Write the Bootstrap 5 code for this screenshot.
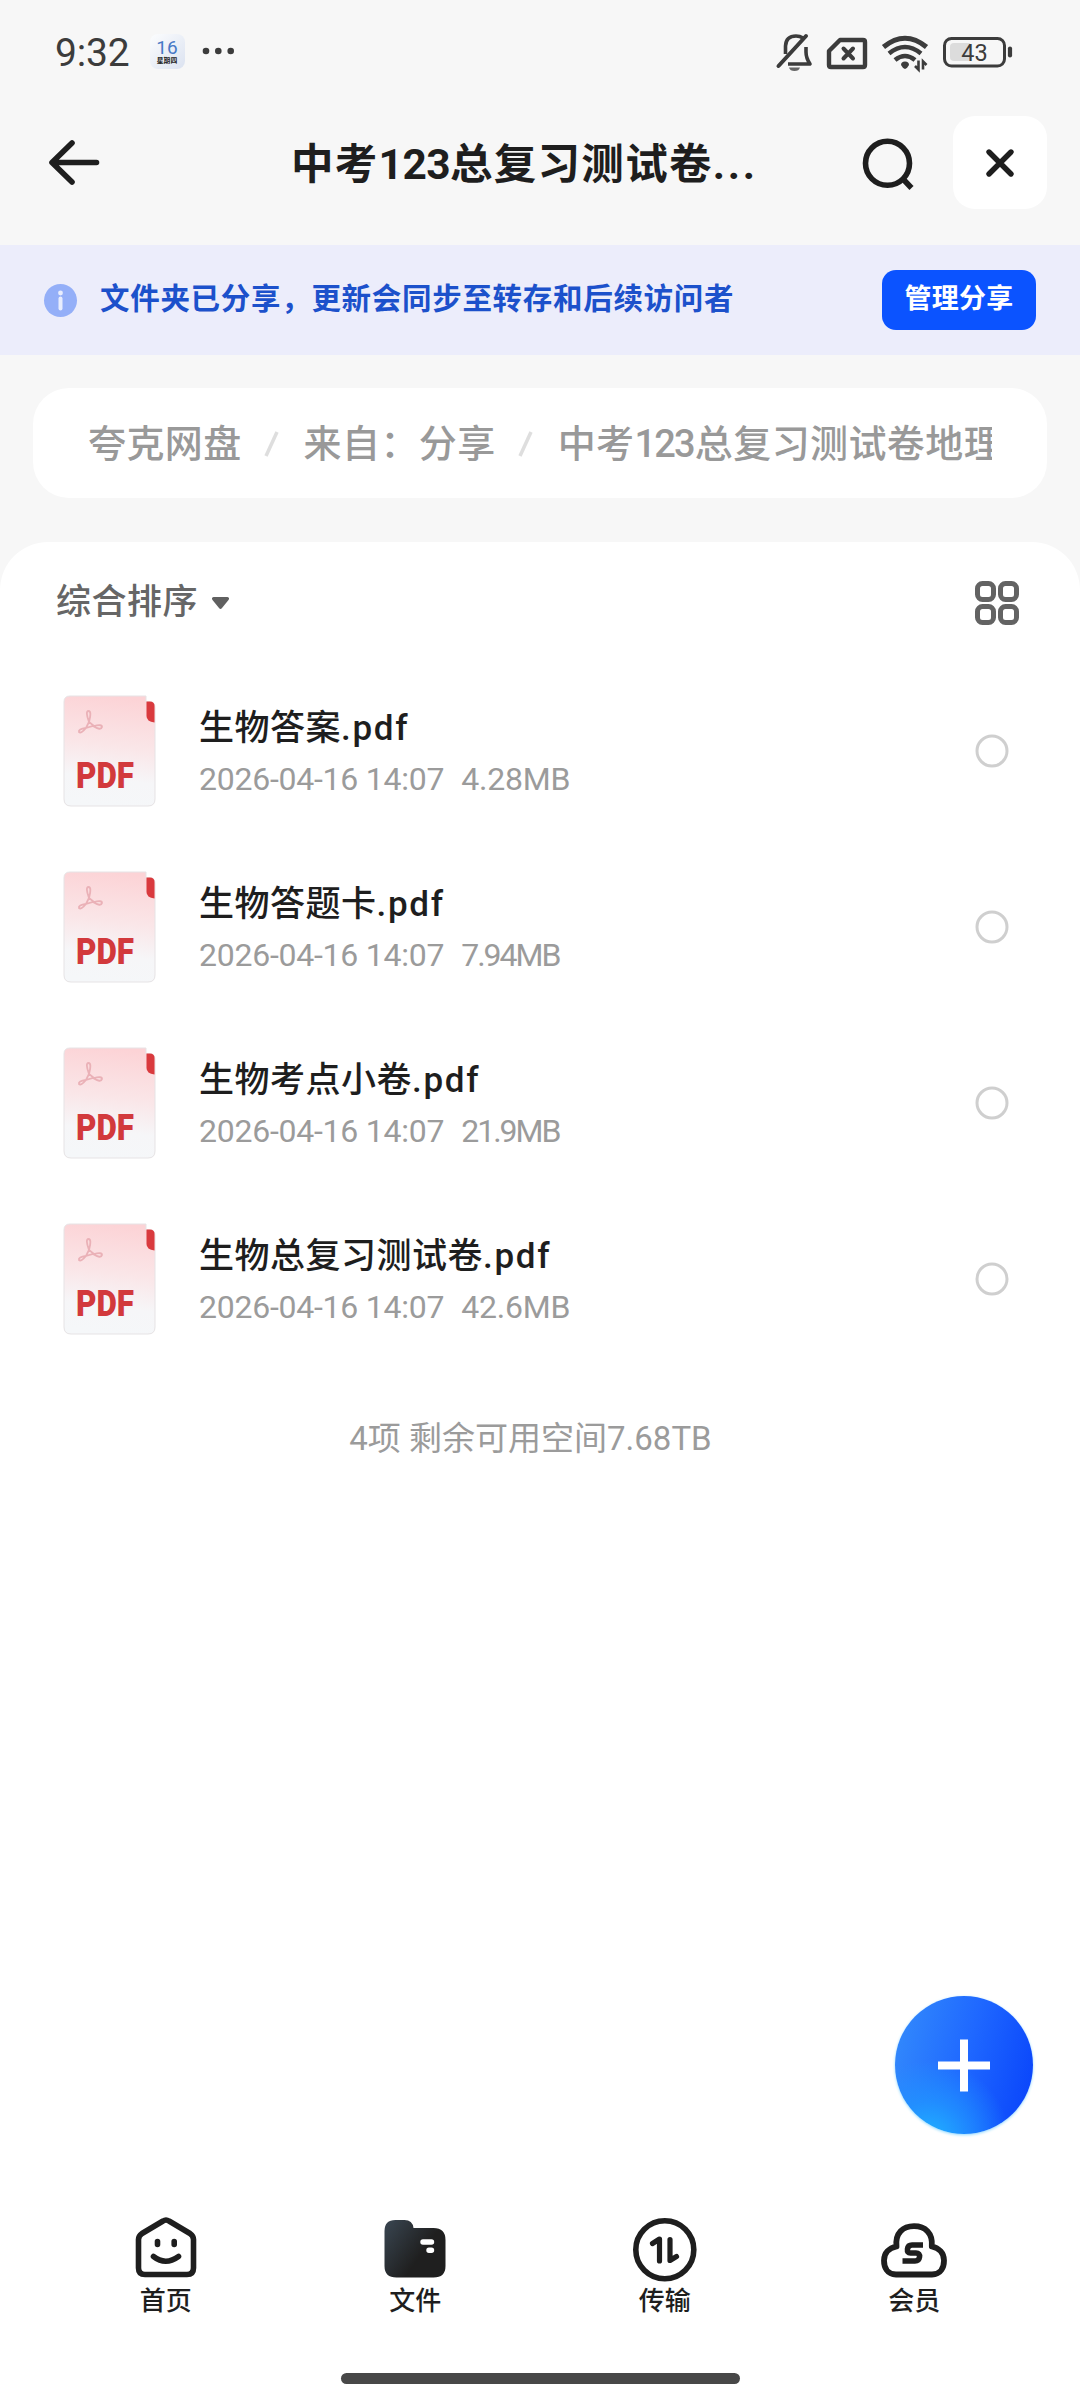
<!DOCTYPE html>
<html lang="zh-CN">
<head>
<meta charset="utf-8">
<meta name="viewport" content="width=device-width, initial-scale=1">
<title>夸克网盘</title>
<link href="https://cdn.jsdelivr.net/npm/bootstrap@5.3.0/dist/css/bootstrap.min.css" rel="stylesheet">
<style>
  body { font-family: Roboto, "Noto Sans CJK SC", sans-serif; background: #f7f7f7; color: #1e1e1e; }
  .screen { width: 1080px; height: 2400px; overflow: hidden; }
  svg { display: block; flex: none; overflow: visible; }
  .statusbar { height: 104px; padding: 0 68px 0 55px; color: #3c3c3c; }
  .clock { font-size: 39px; line-height: 46px; width: 95px; letter-spacing: -.2px; padding-top: 1px; }
  .titlebar { height: 141px; padding: 12px 33px 0 49px; }
  .page-title { font-size: 42.5px; line-height: 60px; font-weight: 700; letter-spacing: 1.3px; margin: 19px 0 0 192px; }
  .page-title .num { letter-spacing: -.6px; }
  .page-title .dots { letter-spacing: 2.6px; }
  .search-icon { margin: 22px 40px 0 0; }
  .close-btn { width: 94px; height: 93px; border-radius: 22px; }
  .share-notice { height: 110px; background: #ecedfb; padding: 0 44px; }
  .notice-text { color: #1c51cb; font-size: 29.500px; font-weight: 700; letter-spacing: .7px; line-height: 40px; margin-left: 23px; padding-bottom: 2px; }
  .manage-btn { width: 154px; height: 60px; border-radius: 14px; background: #0b53ff; font-size: 27px; font-weight: 700; letter-spacing: .3px; line-height: 40px; padding-bottom: 2px !important; }
  .crumbs { margin: 33px 33px 44px; height: 110px; border-radius: 36px; padding: 2px 55px 0 55px; font-size: 38px; letter-spacing: .4px; color: #999; line-height: 56px; font-weight: 500; }
  .crumbs .num { letter-spacing: -1.8px; margin-right: 1px; }
  .sheet { border-radius: 48px 48px 0 0; }
  .sortbar { height: 121px; padding: 1px 61px 0 56px; }
  .sort-label { font-size: 35px; letter-spacing: .5px; color: #666; line-height: 50px; margin-right: 13px; font-weight: 500; }
  .file-row { height: 176px; padding: 0 71px 0 63px; }
  .file-name { font-size: 35px; line-height: 50px; letter-spacing: .5px; font-weight: 500; }
  .file-ext { letter-spacing: 1.7px; }
  .file-meta { font-size: 32px; line-height: 40px; color: #9b9b9b; margin-top: 5px; letter-spacing: -.25px; }
  .file-size { margin-left: 17px; letter-spacing: -.2px; }
  .file-size.tight { letter-spacing: -2px; }
  .file-text { margin-left: 42px; }
  .summary { font-size: 33px; line-height: 46px; color: #9b9b9b; padding-right: 19px; margin-top: 49px; }
  .fab { right: 47.500px; top: 1996px; width: 138px; height: 138px; border-radius: 50%;
    background: radial-gradient(circle at 25% 105%, #20b4ff 0, rgba(32,150,255,.75) 22%, rgba(32,130,255,0) 45%), linear-gradient(105deg, #3187fc 8%, #1f68ff 50%, #0b47fb 92%);
    box-shadow: 0 1px 3px #8fd9ff; border: 0; }
  .tabbar { height: 188px; padding: 32px 41px 0; }
  .tab-item { width: 249.5px; font-size: 26px; line-height: 34px; font-weight: 500; }
  .tab-item svg { height: 66px; margin-bottom: 1px; }
  .home-bar { width: 399px; height: 11px; border-radius: 6px; background: #484848; margin: 0 auto 16px; }
</style>
</head>
<body>
<svg width="0" height="0" class="position-absolute">
  <defs>
    <linearGradient id="sheetFill" x1=".55" y1="0" x2=".45" y2="1">
      <stop offset="0" stop-color="#fcd3d6"/><stop offset=".45" stop-color="#fae6e8"/><stop offset=".75" stop-color="#f6f6f8"/><stop offset="1" stop-color="#f5f7f9"/>
    </linearGradient>
    <symbol id="pdf" viewBox="0 0 94 112">
      <path d="M7 1H83V7H87Q92 7 92 13V104Q92 111 85 111H8Q1 111 1 104V7Q1 1 7 1Z" fill="url(#sheetFill)" stroke="#e6e3e5" stroke-width="1"/>
      <path d="M83.500 6.500H87Q91.500 6.500 91.500 11V27.500Q83.500 26.500 83.500 21Z" fill="#d93a3e"/>
      <g fill="none" stroke="#eab1b7" stroke-width="1.800">
        <path d="M26 27Q22 16 25.500 16Q29 16 26 27L31 31Q39 29 39 32Q38 36 30 31L23 33Q18 39 16 37Q15 34 23 33Z"/>
      </g>
      <text x="13" y="93" font-family="Roboto" font-weight="900" font-size="36.500" textLength="58" lengthAdjust="spacingAndGlyphs" fill="#d2393c">PDF</text>
    </symbol>
    <linearGradient id="folderFill" x1="0" y1=".2" x2=".6" y2=".6">
      <stop offset="0" stop-color="#36414b"/><stop offset="1" stop-color="#1f1f1f"/>
    </linearGradient>
  </defs>
</svg>

<main class="screen position-relative d-flex flex-column">
  <header class="statusbar d-flex align-items-center flex-shrink-0">
    <span class="clock">9:32</span>
    <svg width="84" height="36" viewBox="150 35 84 36">
      <defs><linearGradient id="cal" x1="0" y1="0" x2="1" y2="1"><stop offset="0" stop-color="#fcfdfe"/><stop offset="1" stop-color="#dbe2f0"/></linearGradient></defs>
      <rect x="150" y="35" width="35" height="35" rx="8" fill="url(#cal)"/>
      <text x="167" y="55" text-anchor="middle" font-size="19" fill="#4779c6">16</text>
      <text x="167" y="64" text-anchor="middle" font-size="6.800" font-weight="700" fill="#222">星期四</text>
      <g fill="#3c3c3c"><circle cx="206" cy="52" r="3.300"/><circle cx="218.300" cy="52" r="3.300"/><circle cx="230.700" cy="52" r="3.300"/></g>
    </svg>
    <svg class="ms-auto" width="237" height="42" viewBox="775 31 237 42" fill="none" stroke="#3c3c3c">
      <path d="M778.500 66L806 36" stroke-width="4" stroke-linecap="round"/>
      <path d="M785.500 54V46Q786 36 796 36Q800 36 803 38M806 47V52Q806 58 810 64H788" stroke-width="3.600" stroke-linejoin="round"/>
      <path d="M789 67.500H800Q799 71 794.500 71Q790 71 789 67.500Z" fill="#666" stroke="none"/>
      <path d="M840 40H863Q865 40 865 42V65Q865 67 863 67H831Q829 67 829 65V51Z" stroke-width="4.400" stroke-linejoin="round"/>
      <path d="M843.500 48.500L853 58.500M853 48.500L843.500 58.500" stroke-width="4" stroke-linecap="round"/>
      <path d="M883.500 47Q905 29.500 926.500 47" stroke-width="5"/>
      <path d="M889 53.500Q905 40.500 921 53.500M895 60Q905 52 915 60" stroke-width="4.600"/>
      <path d="M901 65Q901 61.500 905 61.500Q909 61.500 909 65Q907.500 68 905 69Q902.500 68 901 65Z" fill="#3c3c3c" stroke="none"/>
      <path d="M918.500 60.500V69.500L915 66M923 69.500V61.500L926.500 65" stroke-width="2.600"/>
      <rect x="944.500" y="38.500" width="60" height="27.500" rx="7" stroke-width="3"/>
      <path d="M954 43H970V61H954Q950 61 950 57V47Q950 43 954 43Z" fill="#dcdcdc" stroke="none"/>
      <path d="M1010 48.500V55.500" stroke-width="4.200" stroke-linecap="round"/>
      <text x="974.500" y="61" text-anchor="middle" font-size="23.500" fill="#3c3c3c" stroke="none">43</text>
    </svg>
  </header>

  <nav class="titlebar d-flex align-items-start flex-shrink-0">
    <svg class="mt-4" width="50" height="45" viewBox="49 140 50 45" fill="none" stroke="#1e1e1e" stroke-width="5.600" stroke-linecap="round" stroke-linejoin="round"><path d="M72 143L52 162.500L72 182M53 162.500H96.500"/></svg>
    <h1 class="page-title text-nowrap">中考<span class="num">123</span>总复习测试卷<span class="dots">...</span></h1>
    <svg class="search-icon ms-auto" width="51" height="52" viewBox="862 137 51 52" fill="none" stroke="#1e1e1e" stroke-width="5.600"><circle cx="887.500" cy="162.300" r="22"/><path d="M903 178L911.500 187"/></svg>
    <button class="close-btn btn bg-white border-0 p-0 d-flex align-items-center justify-content-center" aria-label="关闭">
      <svg width="28" height="28" viewBox="0 0 28 28" stroke="#1e1e1e" stroke-width="5.400" stroke-linecap="round"><path d="M3 3L25 25M25 3L3 25"/></svg>
    </button>
  </nav>

  <section class="share-notice d-flex align-items-center flex-shrink-0">
    <svg width="33" height="33" viewBox="0 0 33 33"><circle cx="16.500" cy="16.500" r="16.500" fill="#94aff8"/><circle cx="16.500" cy="9" r="2.400" fill="#e8edfd"/><path d="M16.500 14.500V24.500" stroke="#e8edfd" stroke-width="4" stroke-linecap="round"/></svg>
    <span class="notice-text text-nowrap">文件夹已分享，更新会同步至转存和后续访问者</span>
    <button class="manage-btn btn ms-auto text-white border-0 p-0 text-nowrap">管理分享</button>
  </section>

  <div class="crumbs bg-white d-flex align-items-center flex-shrink-0">
    <div class="d-flex align-items-center overflow-hidden text-nowrap w-100">
      <span>夸克网盘</span>
      <svg width="62" height="26" viewBox="0 0 62 26" stroke="#dedede" stroke-width="3.500"><path d="M24 25L35 1"/></svg>
      <span>来自：分享</span>
      <svg width="62" height="26" viewBox="0 0 62 26" stroke="#dedede" stroke-width="3.500"><path d="M24 25L35 1"/></svg>
      <span>中考<span class="num">123</span>总复习测试卷地理</span>
    </div>
  </div>

  <section class="sheet bg-white flex-grow-1 d-flex flex-column">
    <div class="sortbar d-flex align-items-center flex-shrink-0">
      <span class="sort-label">综合排序</span>
      <svg width="19" height="14" viewBox="0 0 19 14"><path d="M2.500 1H16.500Q19 1.500 17.500 4L11 12Q9.500 14 8 12L1.500 4Q0 1.500 2.500 1Z" fill="#606060"/></svg>
      <svg class="ms-auto" width="44" height="44" viewBox="0 0 44 44" fill="none" stroke="#636363" stroke-width="5"><rect x="2.500" y="2.500" width="16" height="16" rx="5"/><rect x="25.500" y="2.500" width="16" height="16" rx="5"/><rect x="2.500" y="25.500" width="16" height="16" rx="5"/><rect x="25.500" y="25.500" width="16" height="16" rx="5"/></svg>
    </div>
    <div id="files"></div>
    <p class="summary text-center mb-0">4项 剩余可用空间7.68TB</p>
  </section>

  <button class="fab position-absolute p-0" aria-label="添加"><svg width="138" height="138" viewBox="0 0 138 138"><path d="M69 43.500V95.500M43 69.500H95" stroke="#fff" stroke-width="8"/></svg></button>

  <footer class="bg-white flex-shrink-0">
    <div class="tabbar d-flex text-center">
      <div class="tab-item d-flex flex-column align-items-center">
        <svg width="66" viewBox="133 2217 66 66" fill="none" stroke="#1e1e1e" stroke-width="5.600" stroke-linecap="round" stroke-linejoin="round"><path d="M163 2221Q166 2219 169 2221L190 2233.500Q193.500 2236 193.500 2239.500V2268Q193.500 2274.500 187 2274.500H145Q138.500 2274.500 138.500 2268V2239.500Q138.500 2236 142 2233.500Z"/><path d="M157.500 2241.500V2244.500M174.200 2241.500V2244.500M153.500 2256.500Q165.500 2266 178.500 2256.500"/></svg>
        <span>首页</span>
      </div>
      <div class="tab-item d-flex flex-column align-items-center">
        <svg width="66" viewBox="382.500 2217 66 66"><path d="M396 2220H405Q413 2220 414 2228H434Q446 2228 446 2240V2266Q446 2277.500 434 2277.500H397Q385 2277.500 385 2266V2231Q385 2220 396 2220Z" fill="url(#folderFill)"/><path d="M423.500 2242H432M429.500 2250.200H432" stroke="#fff" stroke-width="5.400" stroke-linecap="round"/></svg>
        <span>文件</span>
      </div>
      <div class="tab-item d-flex flex-column align-items-center">
        <svg width="66" viewBox="632 2217 66 66" fill="none" stroke="#1e1e1e" stroke-width="5.600" stroke-linejoin="round" stroke-linecap="round"><circle cx="664.800" cy="2249.800" r="29"/><path d="M659.500 2261V2239L652.500 2243.500M670 2239.500V2260.500L676.500 2256.500" stroke-width="5.200"/></svg>
        <span>传输</span>
      </div>
      <div class="tab-item d-flex flex-column align-items-center">
        <svg width="66" viewBox="881 2217 66 66" fill="none" stroke="#1e1e1e" stroke-width="5.800" stroke-linejoin="round"><path d="M896 2274.500C887 2274.500 884 2267 884 2260.500C884 2253 889 2248 896.500 2246.500C895 2233 903 2226.200 914 2226.200C925 2226.200 933 2233 931.800 2246.500C939 2248 944 2253 944 2260.500C944 2267 941 2274.500 932 2274.500Z"/><path d="M923 2245H912Q908 2245 907.500 2249Q907 2253 910.500 2253H916Q920 2253 919.500 2257Q919 2261 915 2261H902.500" stroke-width="5.600"/></svg>
        <span>会员</span>
      </div>
    </div>
    <div class="home-bar"></div>
  </footer>
</main>
<script src="https://cdn.jsdelivr.net/npm/bootstrap@5.3.0/dist/js/bootstrap.bundle.min.js"></script>
<script>
  const files = [
    ["生物答案", "4.28MB", ""],
    ["生物答题卡", "7.94MB", "tight"],
    ["生物考点小卷", "21.9MB", "tight"],
    ["生物总复习测试卷", "42.6MB", ""]
  ];
  document.getElementById("files").innerHTML = files.map(([name, size, fit]) => `
    <div class="file-row d-flex align-items-center">
      <svg width="94" height="112"><use href="#pdf"/></svg>
      <div class="file-text flex-grow-1">
        <div class="file-name">${name}<span class="file-ext">.pdf</span></div>
        <div class="file-meta d-flex"><span>2026-04-16 14:07</span><span class="file-size ${fit}">${size}</span></div>
      </div>
      <svg width="34" height="34" viewBox="0 0 34 34"><circle cx="17" cy="17" r="15" fill="none" stroke="#cfcfcf" stroke-width="3"/></svg>
    </div>`).join("");
</script>
</body>
</html>
